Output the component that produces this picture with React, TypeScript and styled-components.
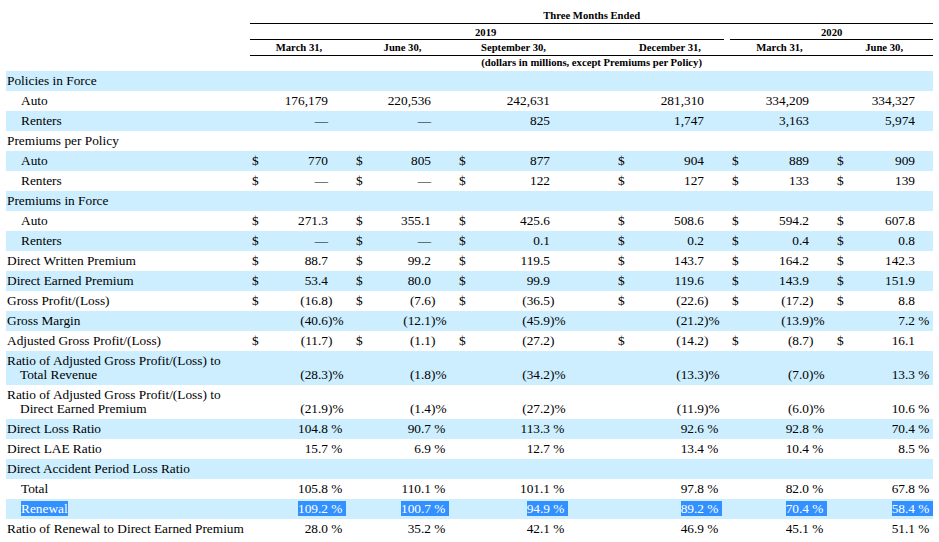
import { Fragment } from "react";
import styled, { createGlobalStyle } from "styled-components";

const GlobalStyle = createGlobalStyle`
  html, body {
    margin: 0;
    padding: 0;
    background: #fff;
  }
  body {
    font-family: "Liberation Serif", "Times New Roman", serif;
    color: #000;
  }
`;

const Page = styled.div`
  padding-left: 6px;
`;

const Table = styled.table`
  width: 927px;
  table-layout: fixed;
  border-collapse: separate;
  border-spacing: 0;
  font-size: 13.33px;
`;

const Head = styled.th<{ $line?: boolean; $pad: string; $align?: string }>`
  font-size: 10.67px;
  font-weight: bold;
  line-height: 12px;
  padding: ${(p) => p.$pad};
  text-align: ${(p) => p.$align || "center"};
  white-space: nowrap;
  border-bottom: ${(p) => (p.$line ? "1px solid #000" : "0")};
`;

const Row = styled.tr<{ $shade: boolean }>`
  background: ${(p) => (p.$shade ? "#cceeff" : "transparent")};
`;

const Cell = styled.td`
  padding: 3px 0;
  line-height: 14px;
  vertical-align: bottom;
  white-space: nowrap;
`;

const Label = styled(Cell)<{ $indent: number }>`
  padding-left: ${(p) => p.$indent}px;
`;

const Wrap = styled.div`
  padding-left: 13px;
`;

const Dollar = styled(Cell)`
  padding-left: 2px;
  text-align: left;
`;

const Num = styled(Cell)`
  text-align: right;
`;

const Suffix = styled(Cell)`
  text-align: left;
`;

const Mark = styled.span`
  background: #3390ff;
  color: #fff;
`;

const dates = ["March 31,", "June 30,", "September 30,", "December 31,", "March 31,", "June 30,"];
const numWidths = [64, 63, 79, 74, 65, 66];
const sufWidths = [20, 20, 20, 20, 20, 18];
const gapWidths = [6, 6, 46, 6, 6];

type Line = {
  label: string;
  more?: string;
  indent?: boolean;
  dollar?: boolean;
  pct?: boolean;
  mark?: boolean;
  values?: string[];
};

const rows: Line[] = [
  { label: "Policies in Force" },
  { label: "Auto", indent: true, values: ["176,179", "220,536", "242,631", "281,310", "334,209", "334,327"] },
  { label: "Renters", indent: true, values: ["—", "—", "825", "1,747", "3,163", "5,974"] },
  { label: "Premiums per Policy" },
  { label: "Auto", indent: true, dollar: true, values: ["770", "805", "877", "904", "889", "909"] },
  { label: "Renters", indent: true, dollar: true, values: ["—", "—", "122", "127", "133", "139"] },
  { label: "Premiums in Force" },
  { label: "Auto", indent: true, dollar: true, values: ["271.3", "355.1", "425.6", "508.6", "594.2", "607.8"] },
  { label: "Renters", indent: true, dollar: true, values: ["—", "—", "0.1", "0.2", "0.4", "0.8"] },
  { label: "Direct Written Premium", dollar: true, values: ["88.7", "99.2", "119.5", "143.7", "164.2", "142.3"] },
  { label: "Direct Earned Premium", dollar: true, values: ["53.4", "80.0", "99.9", "119.6", "143.9", "151.9"] },
  { label: "Gross Profit/(Loss)", dollar: true, values: ["(16.8)", "(7.6)", "(36.5)", "(22.6)", "(17.2)", "8.8"] },
  { label: "Gross Margin", pct: true, values: ["(40.6)", "(12.1)", "(45.9)", "(21.2)", "(13.9)", "7.2"] },
  { label: "Adjusted Gross Profit/(Loss)", dollar: true, values: ["(11.7)", "(1.1)", "(27.2)", "(14.2)", "(8.7)", "16.1"] },
  {
    label: "Ratio of Adjusted Gross Profit/(Loss) to",
    more: "Total Revenue",
    pct: true,
    values: ["(28.3)", "(1.8)", "(34.2)", "(13.3)", "(7.0)", "13.3"],
  },
  {
    label: "Ratio of Adjusted Gross Profit/(Loss) to",
    more: "Direct Earned Premium",
    pct: true,
    values: ["(21.9)", "(1.4)", "(27.2)", "(11.9)", "(6.0)", "10.6"],
  },
  { label: "Direct Loss Ratio", pct: true, values: ["104.8", "90.7", "113.3", "92.6", "92.8", "70.4"] },
  { label: "Direct LAE Ratio", pct: true, values: ["15.7", "6.9", "12.7", "13.4", "10.4", "8.5"] },
  { label: "Direct Accident Period Loss Ratio" },
  { label: "Total", indent: true, pct: true, values: ["105.8", "110.1", "101.1", "97.8", "82.0", "67.8"] },
  { label: "Renewal", indent: true, pct: true, mark: true, values: ["109.2", "100.7", "94.9", "89.2", "70.4", "58.4"] },
  { label: "Ratio of Renewal to Direct Earned Premium", pct: true, values: ["28.0", "35.2", "42.1", "46.9", "45.1", "51.1"] },
];

// "(16.8)" -> "(16.8" + ")" so the closing paren hangs in its own column
function split(v: string, pct?: boolean, mark?: boolean) {
  const neg = v.endsWith(")");
  const num = neg ? v.slice(0, -1) : v;
  let suf = pct ? (neg ? ")%" : "\u00a0%") : neg ? ")" : "";
  if (mark) suf += "\u00a0";
  return [num, suf];
}

function BodyRow({ row, shade }: { row: Line; shade: boolean }) {
  const show = (t: string) => (row.mark && t ? <Mark>{t}</Mark> : t);
  return (
    <Row $shade={shade}>
      <Label $indent={row.indent ? 15 : 1}>
        {row.more ? (
          <>
            <div>{row.label}</div>
            <Wrap>{row.more}</Wrap>
          </>
        ) : (
          show(row.label)
        )}
      </Label>
      {row.values ? (
        row.values.map((v, i) => {
          const [num, suf] = split(v, row.pct, row.mark);
          return (
            <Fragment key={i}>
              <Dollar>{row.dollar ? "$" : ""}</Dollar>
              <Num>{show(num)}</Num>
              <Suffix>{show(suf)}</Suffix>
              {i < 5 && <Cell />}
            </Fragment>
          );
        })
      ) : (
        <Cell colSpan={23} />
      )}
    </Row>
  );
}

export default function App() {
  return (
    <Page>
      <GlobalStyle />
      <Table>
        <colgroup>
          <col style={{ width: 244 }} />
          {numWidths.map((w, i) => (
            <Fragment key={i}>
              <col style={{ width: 14 }} />
              <col style={{ width: w }} />
              <col style={{ width: sufWidths[i] }} />
              {i < 5 && <col style={{ width: gapWidths[i] }} />}
            </Fragment>
          ))}
        </colgroup>
        <thead>
          <tr>
            <Head $pad="9px 0 2px" />
            <Head $pad="9px 0 2px" $line colSpan={23}>
              Three Months Ended
            </Head>
          </tr>
          <tr>
            <Head $pad="2px 0 1px" />
            <Head $pad="2px 0 1px 225px" $line $align="left" colSpan={15}>
              2019
            </Head>
            <Head $pad="2px 0 1px" />
            <Head $pad="2px 0 1px" $line colSpan={7}>
              2020
            </Head>
          </tr>
          <tr>
            <Head $pad="1px 0 2px" />
            {dates.map((d, i) => (
              <Fragment key={i}>
                <Head $pad="1px 0 2px" $line colSpan={3}>
                  {d}
                </Head>
                {i < 5 && <Head $pad="1px 0 2px" $line />}
              </Fragment>
            ))}
          </tr>
          <tr>
            <Head $pad="0 0 3px" />
            <Head $pad="0 0 3px" colSpan={23}>
              (dollars in millions, except Premiums per Policy)
            </Head>
          </tr>
        </thead>
        <tbody>
          {rows.map((r, i) => (
            <BodyRow key={i} row={r} shade={i % 2 === 0} />
          ))}
        </tbody>
      </Table>
    </Page>
  );
}
